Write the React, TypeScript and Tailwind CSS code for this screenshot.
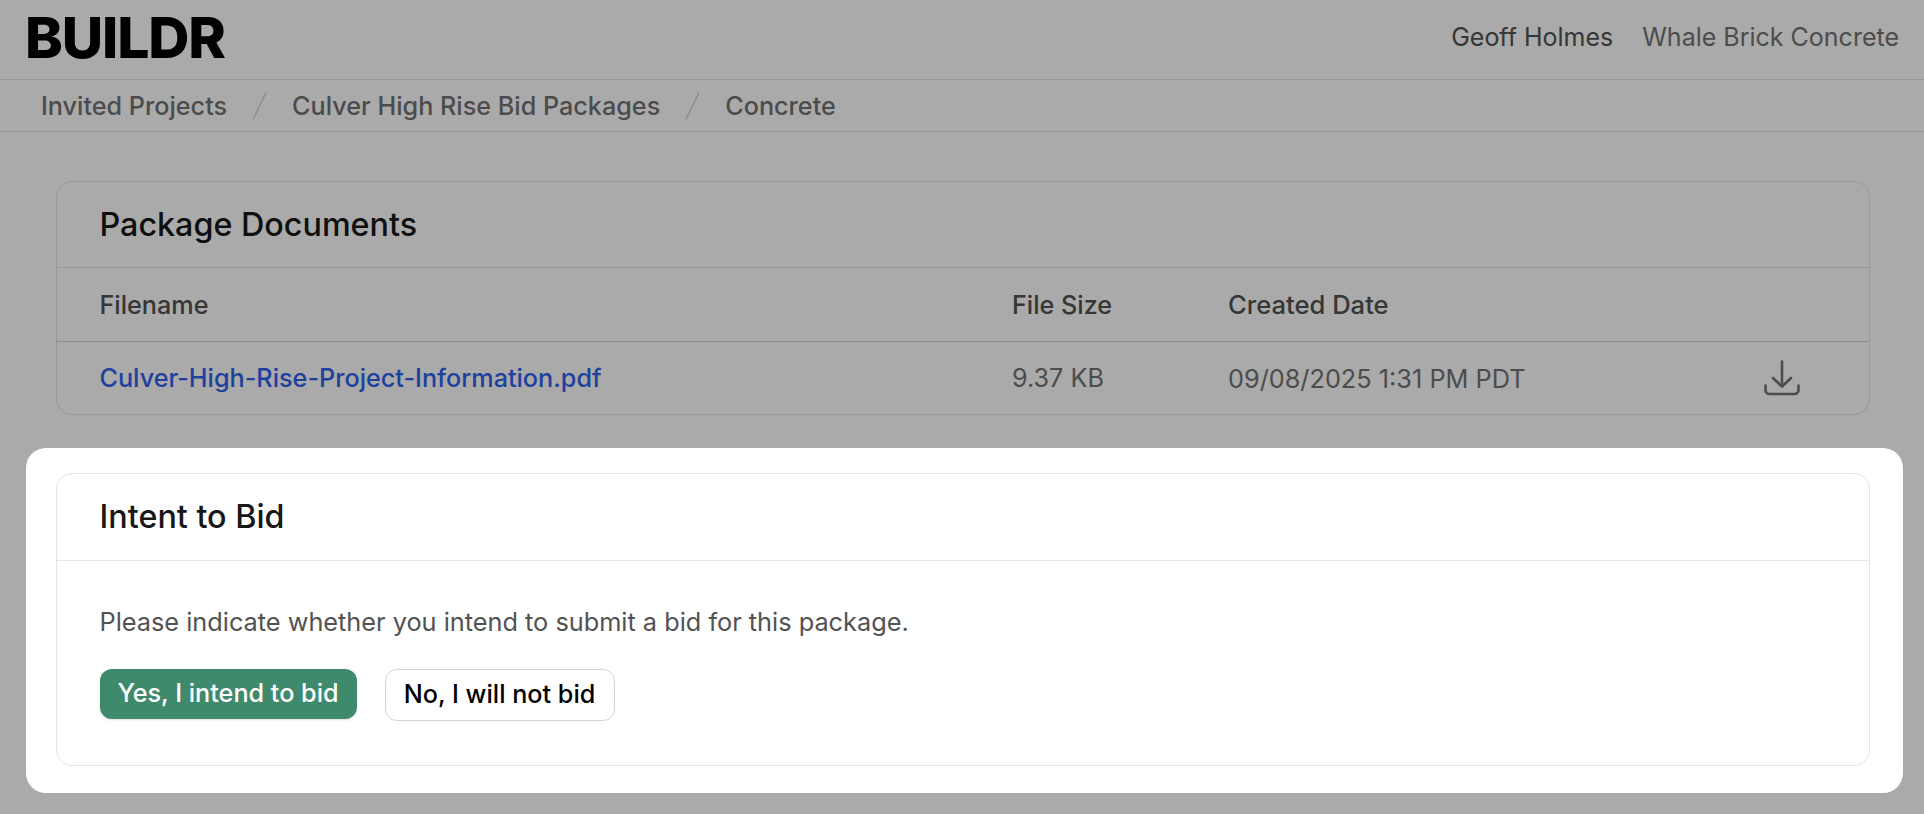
const font = "font-['Inter',sans-serif]";

function DownloadIcon() {
  return (
    <svg width="36" height="36" viewBox="0 0 36 36" fill="none" stroke="currentColor" strokeWidth="2.6" strokeLinecap="round" strokeLinejoin="round">
      <path d="M18 1.5V26" />
      <path d="M9 18l9 8.5 9-8.5" />
      <path d="M1.5 25.5v4.5a4 4 0 0 0 4 4h25a4 4 0 0 0 4-4v-4.5" />
    </svg>
  );
}

function Slash() {
  return <span className="mx-[32px] h-[30px] w-px rotate-[26deg] bg-[#c4c4c4]" />;
}

export default function App() {
  return (
    <div className={`relative h-[814px] w-[1924px] overflow-hidden bg-white ${font}`}>
      <header className="flex h-[80px] items-center justify-between border-b border-[#e5e5e5] pl-[25px] pr-[25px]">
        <span className="pb-[5px] text-[57px] font-[850] leading-none tracking-[-0.02em] text-black">BUILDR</span>
        <div className="flex items-center gap-[29px] pb-[3px] text-[25px]">
          <span className="text-[#525252]">Geoff Holmes</span>
          <span className="text-[#737373]">Whale Brick Concrete</span>
        </div>
      </header>
      <nav className="flex h-[52px] items-center border-b border-[#e5e5e5] pl-[41px] text-[25.2px] font-medium text-[#737373]">
        <span className="pt-[2px]">Invited Projects</span>
        <Slash />
        <span className="pt-[2px]">Culver High Rise Bid Packages</span>
        <Slash />
        <span className="pt-[2px]">Concrete</span>
      </nav>
      <main className="pl-[56px] pr-[54px] pt-[49px]">
        <section className="rounded-[16px] border border-[#e5e5e5]">
          <h2 className="flex h-[86px] items-center border-b border-[#e5e5e5] pl-[42.5px] pr-[43px] pt-[2px] text-[32.3px] font-medium text-[#171717]">Package Documents</h2>
          <div className="flex h-[74px] items-center border-b border-[#d4d4d4] pl-[42.5px] pr-[43px] pt-[2px] text-[25.2px] font-medium text-[#525252]">
            <span className="w-[912.5px]">Filename</span>
            <span className="w-[216px]">File Size</span>
            <span className="text-[25.6px]">Created Date</span>
          </div>
          <div className="flex h-[72px] items-center pl-[42.5px] pr-[43px] text-[25.2px] text-[#737373]">
            <span className="w-[912.5px] pt-[2px] font-medium text-[#2f62ee]">Culver-High-Rise-Project-Information.pdf</span>
            <span className="w-[216px] pt-[2px]">9.37 KB</span>
            <span className="flex-1 pt-[2px] text-[25.3px]">09/08/2025 1:31 PM PDT</span>
            <span className="mr-[26px] text-[#737373]"><DownloadIcon /></span>
          </div>
        </section>
      </main>
      <div className="absolute inset-0 bg-[#000000]/[0.333]" />
      <div className="absolute left-[26px] top-[448px] w-[1877px] rounded-[20px] bg-white pb-[27px] pl-[30px] pr-[33px] pt-[25px]">
        <section className="rounded-[16px] border border-[#e5e5e5]">
          <h2 className="flex h-[87px] items-center border-b border-[#e5e5e5] pl-[42.5px] pr-[43px] text-[32.3px] font-medium text-[#171717]">Intent to Bid</h2>
          <div className="pb-[44px] pl-[42.5px] pr-[43px] pt-[43px]">
            <p className="text-[25.3px] leading-[36px] text-[#525252]">Please indicate whether you intend to submit a bid for this package.</p>
            <div className="mt-[29px] flex items-start gap-[28px]">
              <button className="h-[50px] w-[257px] rounded-[12px] bg-[#3f8a6c] text-[25.2px] font-medium text-white shadow-sm">Yes, I intend to bid</button>
              <button className="h-[52px] w-[230px] rounded-[12px] border border-[#d4d4d4] bg-white text-[25.2px] font-medium text-black">No, I will not bid</button>
            </div>
          </div>
        </section>
      </div>
    </div>
  );
}
